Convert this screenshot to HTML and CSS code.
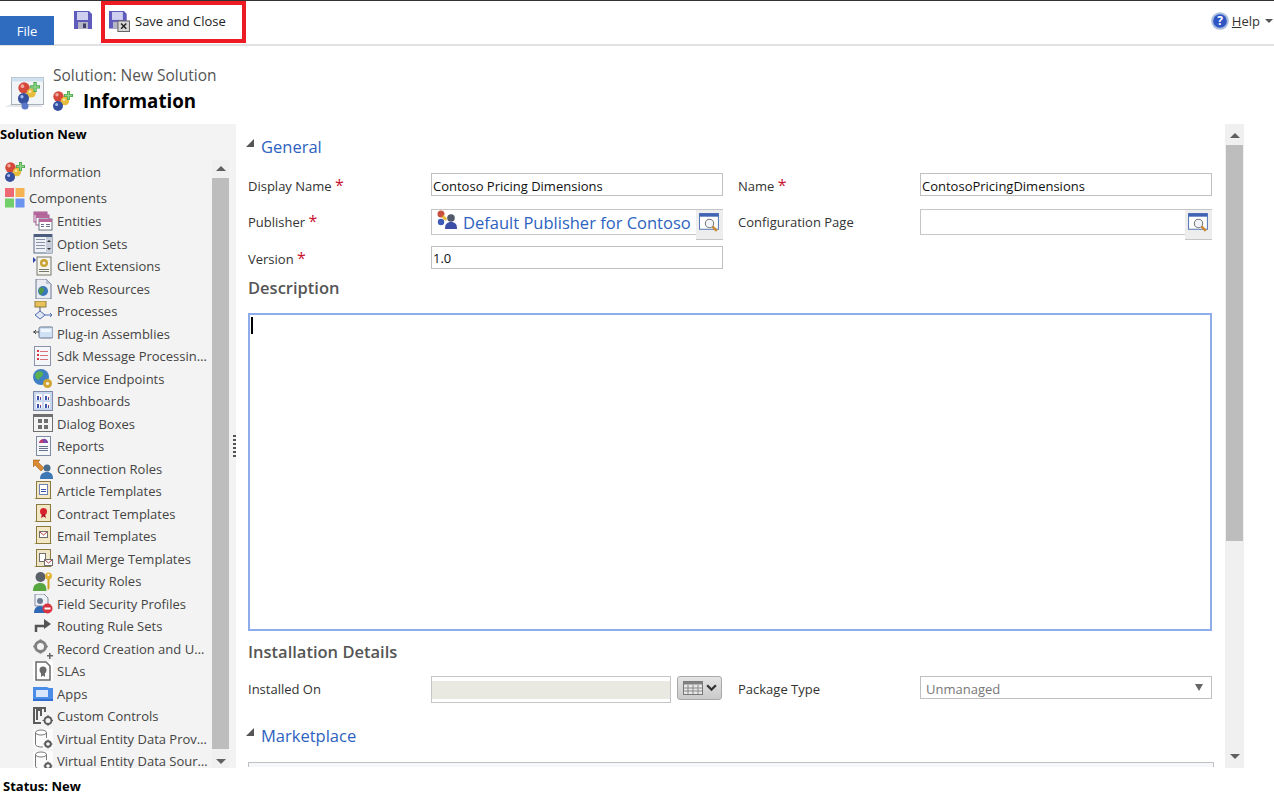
FILE: index.html
```html
<!DOCTYPE html>
<html lang="en">
<head>
<meta charset="UTF-8">
<title>Solution: New Solution</title>
<link rel="stylesheet" href="styles.css">
</head>
<body>

<!-- shared icons -->
<svg class="defs" width="0" height="0">
  <defs>
    <symbol id="i-info" viewBox="0 0 20 20">
      <path d="M6 12l7-6 3 3-8 7z" fill="#d9a92c"/>
      <circle cx="5.500" cy="5.500" r="5.200" fill="#d4493a"/>
      <circle cx="4" cy="3.800" r="1.700" fill="#f4a9a0"/>
      <circle cx="12" cy="10" r="4.200" fill="#e8bd3d"/>
      <circle cx="11" cy="8.800" r="1.300" fill="#f8e6a8"/>
      <circle cx="5" cy="15" r="5" fill="#34509f"/>
      <circle cx="3.600" cy="13.400" r="1.500" fill="#a9bbee"/>
      <path d="M14 0h3v3h3v3h-3v3h-3V6h-3V3h3z" fill="#4aa84a"/>
      <path d="M14.800 .8h1.400v3h3v1.400h-3v3h-1.400v-3h-3V3.800h3z" fill="#8fd48a"/>
    </symbol>
    <symbol id="i-components" viewBox="0 0 20 20">
      <rect width="9" height="9" fill="#ee6a72"/>
      <rect x="10.500" width="9" height="9" fill="#f5b454"/>
      <rect y="10.500" width="9" height="9" fill="#72d06a"/>
      <rect x="10.500" y="10.500" width="9" height="9" fill="#6c94ee"/>
    </symbol>
    <symbol id="i-entities" viewBox="0 0 20 20">
      <rect x="1" y="1" width="13" height="10" fill="#fff" stroke="#a05a8c"/>
      <rect x="1" y="1" width="13" height="3" fill="#b8679c"/>
      <rect x="3" y="4" width="13" height="10" fill="#fff" stroke="#a05a8c"/>
      <rect x="3" y="4" width="13" height="3" fill="#b8679c"/>
      <rect x="6" y="8" width="13" height="11" fill="#fff" stroke="#6b7280"/>
      <rect x="6" y="8" width="13" height="3" fill="#b8679c"/>
      <path d="M8 13h3v1H8zm5 0h4v1h-4zm-5 2h3v1H8zm5 0h4v1h-4z" fill="#66708a"/>
    </symbol>
    <symbol id="i-options" viewBox="0 0 20 20">
      <rect x="1" y="0" width="18" height="19" fill="#eef1f6" stroke="#5c6a86"/>
      <rect x="1" y="0" width="18" height="3" fill="#4c5c7c"/>
      <path d="M3 5h9v1H3zm0 3h9v1H3zm0 3h9v1H3zm0 3h9v1H3z" fill="#8692aa"/>
      <rect x="13" y="3" width="6" height="16" fill="#c7cedb"/>
      <path d="M16 6l2 2h-4zM16 16l-2-2h4z" fill="#333"/>
    </symbol>
    <symbol id="i-client" viewBox="0 0 20 20">
      <path d="M0 1l3 3-3 3z" fill="#2b3fa8"/>
      <rect x="4" y="1" width="14" height="18" fill="#f4f4ea" stroke="#77786e"/>
      <circle cx="11" cy="7" r="4" fill="#c9a232"/>
      <circle cx="11" cy="7" r="1.600" fill="#f4f4ea"/>
      <path d="M6 13h10v1H6zm0 2h10v1H6z" fill="#77786e"/>
    </symbol>
    <symbol id="i-web" viewBox="0 0 20 20">
      <path d="M3 0h10l5 5v15H3z" fill="#e9edf3" stroke="#6a7690"/>
      <path d="M13 0v5h5z" fill="#b7c1d3"/>
      <circle cx="10" cy="12" r="5" fill="#3b78b8"/>
      <path d="M7 9c2-1 4 0 4 2s-3 3-3 5c-2-1-3-5-1-7z" fill="#4f9b45"/>
    </symbol>
    <symbol id="i-process" viewBox="0 0 20 20">
      <rect x="2" y="0" width="11" height="6" fill="#e8c158" stroke="#8b7a40"/>
      <path d="M7 6v4" stroke="#556" fill="none"/>
      <path d="M7 10l5 4-5 4-5-4z" fill="#dfe6f4" stroke="#4f6db0"/>
      <path d="M12 14h7M17 12l2 2-2 2" stroke="#4f6db0" fill="none"/>
    </symbol>
    <symbol id="i-plugin" viewBox="0 0 20 20">
      <rect x="6" y="3" width="14" height="11" rx="1.500" fill="#cfe0f5" stroke="#66748c"/>
      <path d="M0 8h6M3 6L1 8l2 2" stroke="#444" fill="none"/>
      <rect x="8" y="5" width="10" height="3" fill="#f0f6fd"/>
    </symbol>
    <symbol id="i-sdk" viewBox="0 0 20 20">
      <rect x="1.500" y="0.500" width="16" height="19" fill="#f4f6fa" stroke="#8a94a8"/>
      <path d="M4 4h2v2H4zm0 4h2v2H4zm0 4h2v2H4z" fill="#d8333f"/>
      <path d="M7 5h8v1H7zm0 4h8v1H7zm0 4h8v1H7z" fill="#d8707a"/>
    </symbol>
    <symbol id="i-service" viewBox="0 0 20 20">
      <circle cx="8" cy="8" r="8" fill="#3f80c4"/>
      <path d="M3 4c3-3 7-2 7 1s-4 3-4 6c-3-1-5-4-3-7z" fill="#5bb14e"/>
      <circle cx="14.500" cy="14.500" r="4.500" fill="#d0a52f"/>
      <circle cx="14.500" cy="14.500" r="1.600" fill="#f3f3f3"/>
    </symbol>
    <symbol id="i-dash" viewBox="0 0 20 20">
      <rect x="0.500" y="0.500" width="19" height="19" fill="#c9d6ee" stroke="#7c8aa6"/>
      <path d="M3 3h6v6H3zm8 0h6v6h-6zM3 11h6v6H3zm8 0h6v6h-6z" fill="#f5f7fb"/>
      <path d="M4 5h2v4H4zm3 1h1v3H7zm5-1h2v4h-2zm3 1h1v3h-1zM4 13h2v4H4zm3 1h1v3H7zm5-1h2v4h-2zm3 1h1v3h-1z" fill="#3c54ac"/>
      <path d="M7 6h1v1H7zm8 0h1v1h-1zM7 14h1v1H7zm8 0h1v1h-1z" fill="#d8333f"/>
    </symbol>
    <symbol id="i-dialog" viewBox="0 0 20 20">
      <rect x="0.500" y="0.500" width="19" height="17" fill="#f3f3f3" stroke="#6f6f6f"/>
      <rect x="0.500" y="0.500" width="19" height="2.500" fill="#6f6f6f"/>
      <path d="M5 5h4v4H5zm6 0h4v4h-4zM5 11h4v4H5zm6 0h4v4h-4z" fill="#6f6f6f"/>
    </symbol>
    <symbol id="i-report" viewBox="0 0 20 20">
      <rect x="3.500" y="0.500" width="14" height="19" fill="#f6f7fa" stroke="#7f8ba2"/>
      <path d="M6 7a4.500 4 0 0 1 9 0z" fill="#c23a6b"/>
      <path d="M10 3a4 4 0 0 1 5 4h-5z" fill="#7a4ba8"/>
      <path d="M6 10h9v1H6zm0 2h9v1H6zm0 2h9v1H6z" fill="#66708a"/>
    </symbol>
    <symbol id="i-connection" viewBox="0 0 20 20">
      <path d="M0 1h7l-2 2 6 6-3 3-6-6-2 2z" fill="#d98a32" stroke="#8f5415" stroke-width="0.500"/>
      <circle cx="14" cy="9" r="3.500" fill="#4a6c8c"/>
      <path d="M7 20c0-5 3-7 7-7s6 2 6 7z" fill="#3e78b4"/>
    </symbol>
    <symbol id="i-article" viewBox="0 0 20 20">
      <path d="M1 18l3-2h13l2 2z" fill="#b8a060"/>
      <rect x="3.500" y="0.500" width="14" height="17" fill="#f2e8c6" stroke="#8b7a40"/>
      <rect x="6.500" y="3.500" width="8" height="10" fill="#fff" stroke="#6d7eb8"/>
      <path d="M8 8h5v1H8zm0 2h5v1H8z" fill="#3c54ac"/>
    </symbol>
    <symbol id="i-contract" viewBox="0 0 20 20">
      <path d="M1 18l3-2h13l2 2z" fill="#b8a060"/>
      <rect x="3.500" y="0.500" width="14" height="17" fill="#f2e8c6" stroke="#8b7a40"/>
      <circle cx="10.500" cy="7.500" r="3.500" fill="#d8232f"/>
      <path d="M9 10l-1 4 2.500-1.500L13 14l-1-4z" fill="#b01a24"/>
    </symbol>
    <symbol id="i-email" viewBox="0 0 20 20">
      <path d="M1 18l3-2h13l2 2z" fill="#b8a060"/>
      <rect x="3.500" y="0.500" width="14" height="17" fill="#f2e8c6" stroke="#8b7a40"/>
      <rect x="6.500" y="5.500" width="8" height="6" fill="#fff" stroke="#6f6f6f"/>
      <path d="M7 6l3.500 3L14 6" stroke="#b03a3a" fill="none"/>
    </symbol>
    <symbol id="i-merge" viewBox="0 0 20 20">
      <path d="M1 18l3-2h13l2 2z" fill="#b8a060"/>
      <rect x="3.500" y="0.500" width="14" height="17" fill="#efe6c8" stroke="#8b7a40"/>
      <rect x="6.500" y="4.500" width="6" height="8" fill="#fff" stroke="#6f6f6f"/>
      <rect x="11.500" y="10.500" width="8" height="6" fill="#fff" stroke="#6f6f6f"/>
      <path d="M12 11l3.500 3 3.500-3" stroke="#b03a3a" fill="none"/>
    </symbol>
    <symbol id="i-security" viewBox="0 0 20 20">
      <circle cx="7.500" cy="6" r="5" fill="#5c6068"/>
      <path d="M0 20c0-6 3-8 7.500-8s6 3 6 8z" fill="#57a63f"/>
      <circle cx="15.500" cy="5" r="3.500" fill="#e3b533"/>
      <circle cx="15.500" cy="4" r="1.100" fill="#f3f3f3"/>
      <path d="M14.500 8h2v9l-1 2-1-1z" fill="#d19f22"/>
    </symbol>
    <symbol id="i-field" viewBox="0 0 20 20">
      <path d="M2 0h9l4 4v8H2z" fill="#eef1f6" stroke="#7f8ba2"/>
      <circle cx="7" cy="7" r="3" fill="#6c7a92"/>
      <path d="M1 19c0-4 2-7 6-7s5 3 5 7z" fill="#2f68b4"/>
      <circle cx="14.500" cy="14.500" r="5" fill="#d8333f"/>
      <rect x="11.500" y="13.500" width="6" height="2" fill="#fff"/>
    </symbol>
    <symbol id="i-routing" viewBox="0 0 20 20">
      <path d="M3 16v-6h8" stroke="#555" stroke-width="2.500" fill="none"/>
      <path d="M11 3l7 5-7 5z" fill="#555"/>
    </symbol>
    <symbol id="i-record" viewBox="0 0 20 20">
      <circle cx="7.500" cy="7.500" r="5" fill="none" stroke="#808080" stroke-width="3"/>
      <circle cx="7.500" cy="1.500" r="1.300" fill="#808080"/>
      <circle cx="7.500" cy="13.500" r="1.300" fill="#808080"/>
      <circle cx="1.500" cy="7.500" r="1.300" fill="#808080"/>
      <circle cx="13.500" cy="7.500" r="1.300" fill="#808080"/>
      <path d="M16 14h1.500v2H20v1.500h-2.500V20H16v-2.500h-2V16h2z" fill="#666"/>
    </symbol>
    <symbol id="i-sla" viewBox="0 0 20 20">
      <rect width="20" height="20" fill="#fff"/>
      <path d="M3 1h10l4 4v14H3z" fill="#fff" stroke="#6a6a6a" stroke-width="1.500"/>
      <circle cx="10" cy="9" r="3.500" fill="#6a6a6a"/>
      <path d="M8 11v5l2-1.500 2 1.500v-5z" fill="#6a6a6a"/>
    </symbol>
    <symbol id="i-apps" viewBox="0 0 20 20">
      <path d="M0 3h14l2 1h4v13H0z" fill="#4a8de8"/>
      <rect x="3" y="6" width="12" height="7" fill="#d8e6fa"/>
      <rect x="0" y="15" width="20" height="2" fill="#2f6fd0"/>
    </symbol>
    <symbol id="i-custom" viewBox="0 0 20 20">
      <path d="M0 1h13v5h-2V3H9v7H7V5H5v9H3V3H2v13h6v2H0z" fill="#5c5c5c"/>
      <path d="M9 1h4v2H9z" fill="#5c5c5c"/>
      <circle cx="15" cy="14.500" r="3.500" fill="none" stroke="#5c5c5c" stroke-width="2"/>
      <path d="M14.500 9h1v2h-1zm0 9h1v2h-1zM9.500 14h2v1h-2zm9 0h2v1h-2z" fill="#5c5c5c"/>
    </symbol>
    <symbol id="i-virtual" viewBox="0 0 20 20">
      <rect width="20" height="20" fill="#fbfbfb"/>
      <ellipse cx="8" cy="3.500" rx="5.500" ry="2.500" fill="#fff" stroke="#777"/>
      <path d="M2.500 3.500v12c0 1.500 3 2.500 5.500 2.500h2M13.500 3.500V9" fill="none" stroke="#777"/>
      <circle cx="15" cy="15" r="2.800" fill="none" stroke="#5c5c5c" stroke-width="2"/>
      <path d="M14.500 10.500h1v1.500h-1zm0 7.500h1v1.500h-1zM10.500 14.500H12v1h-1.500zm7.500 0h1.500v1H18z" fill="#5c5c5c"/>
    </symbol>
    <symbol id="i-save" viewBox="0 0 18 18">
      <path d="M0 0h15l3 3v15H0z" fill="#5f5bbd"/>
      <rect x="3" y="1" width="11" height="8" fill="#cfcff0"/>
      <rect x="4" y="11" width="10" height="7" fill="#b4b4c4"/>
      <rect x="9" y="12.500" width="3" height="4.500" fill="#40406a"/>
    </symbol>
    <symbol id="i-lookup" viewBox="0 0 20 20">
      <rect x="0.500" y="0.500" width="18" height="15" fill="#fff" stroke="#5a7ab8"/>
      <rect x="0.500" y="0.500" width="18" height="3" fill="#3f62b4"/>
      <circle cx="10" cy="10" r="4" fill="#f0f3f8" stroke="#777"/>
      <path d="M13 13l4 4" stroke="#c98a36" stroke-width="2.500"/>
    </symbol>
  </defs>
</svg>

<div class="ribbon">
  <div class="file-tab">File</div>
  <svg class="save-icon"><use href="#i-save"/></svg>
  <div class="save-close">
    <svg class="save-close-icon" viewBox="0 0 20 20">
      <use href="#i-save" width="17" height="17"/>
      <rect x="8.500" y="9.500" width="11" height="10" fill="#d9d9d9" stroke="#666"/>
      <path d="M11.500 12l5 5M16.500 12l-5 5" stroke="#222" stroke-width="1.400"/>
    </svg>
    <span>Save and Close</span>
  </div>
  <div class="help">
    <svg class="help-icon" viewBox="0 0 18 18">
      <circle cx="9" cy="9" r="8.800" fill="#a9bcdc"/>
      <circle cx="9" cy="9" r="6.800" fill="#2f55c4"/>
      <text x="9" y="13" text-anchor="middle" class="help-mark">?</text>
    </svg>
    <span class="help-text"><u>H</u>elp</span>
    <span class="help-caret"></span>
  </div>
</div>

<div class="page-head">
  <svg class="head-icon" viewBox="0 0 40 36">
    <path d="M0 32l8-4h26l4 4z" fill="#e4e6ea"/>
    <rect x="6.500" y="2.500" width="32" height="27" fill="#f2f5f8" stroke="#a8b0b8"/>
    <rect x="6.500" y="2.500" width="32" height="4" fill="#cfe0ee"/>
    <use href="#i-info" x="13" y="7" width="22" height="22"/>
    <circle cx="20" cy="31" r="3.500" fill="#5a78c8"/>
  </svg>
  <div class="head-text">
    <div class="head-sub">Solution: New Solution</div>
    <div class="head-title">
      <svg class="title-icon"><use href="#i-info"/></svg>
      <span>Information</span>
    </div>
  </div>
</div>

<div class="main">
  <nav class="nav">
    <div class="nav-title">Solution New</div>
    <div class="nav-body">
      <ul class="nav-list">
        <li class="nav-top"><svg class="nav-icon"><use href="#i-info"/></svg><span>Information</span></li>
        <li class="nav-top"><svg class="nav-icon"><use href="#i-components"/></svg><span>Components</span></li>
        <li class="nav-sub"><svg class="nav-icon"><use href="#i-entities"/></svg><span>Entities</span></li>
        <li class="nav-sub"><svg class="nav-icon"><use href="#i-options"/></svg><span>Option Sets</span></li>
        <li class="nav-sub"><svg class="nav-icon"><use href="#i-client"/></svg><span>Client Extensions</span></li>
        <li class="nav-sub"><svg class="nav-icon"><use href="#i-web"/></svg><span>Web Resources</span></li>
        <li class="nav-sub"><svg class="nav-icon"><use href="#i-process"/></svg><span>Processes</span></li>
        <li class="nav-sub"><svg class="nav-icon"><use href="#i-plugin"/></svg><span>Plug-in Assemblies</span></li>
        <li class="nav-sub"><svg class="nav-icon"><use href="#i-sdk"/></svg><span>Sdk Message Processing Steps</span></li>
        <li class="nav-sub"><svg class="nav-icon"><use href="#i-service"/></svg><span>Service Endpoints</span></li>
        <li class="nav-sub"><svg class="nav-icon"><use href="#i-dash"/></svg><span>Dashboards</span></li>
        <li class="nav-sub"><svg class="nav-icon"><use href="#i-dialog"/></svg><span>Dialog Boxes</span></li>
        <li class="nav-sub"><svg class="nav-icon"><use href="#i-report"/></svg><span>Reports</span></li>
        <li class="nav-sub"><svg class="nav-icon"><use href="#i-connection"/></svg><span>Connection Roles</span></li>
        <li class="nav-sub"><svg class="nav-icon"><use href="#i-article"/></svg><span>Article Templates</span></li>
        <li class="nav-sub"><svg class="nav-icon"><use href="#i-contract"/></svg><span>Contract Templates</span></li>
        <li class="nav-sub"><svg class="nav-icon"><use href="#i-email"/></svg><span>Email Templates</span></li>
        <li class="nav-sub"><svg class="nav-icon"><use href="#i-merge"/></svg><span>Mail Merge Templates</span></li>
        <li class="nav-sub"><svg class="nav-icon"><use href="#i-security"/></svg><span>Security Roles</span></li>
        <li class="nav-sub"><svg class="nav-icon"><use href="#i-field"/></svg><span>Field Security Profiles</span></li>
        <li class="nav-sub"><svg class="nav-icon"><use href="#i-routing"/></svg><span>Routing Rule Sets</span></li>
        <li class="nav-sub"><svg class="nav-icon"><use href="#i-record"/></svg><span>Record Creation and Update Rules</span></li>
        <li class="nav-sub"><svg class="nav-icon"><use href="#i-sla"/></svg><span>SLAs</span></li>
        <li class="nav-sub"><svg class="nav-icon"><use href="#i-apps"/></svg><span>Apps</span></li>
        <li class="nav-sub"><svg class="nav-icon"><use href="#i-custom"/></svg><span>Custom Controls</span></li>
        <li class="nav-sub"><svg class="nav-icon"><use href="#i-virtual"/></svg><span>Virtual Entity Data Providers</span></li>
        <li class="nav-sub"><svg class="nav-icon"><use href="#i-virtual"/></svg><span>Virtual Entity Data Sources</span></li>
      </ul>
      <div class="nav-scroll">
        <div class="arrow-up"></div>
        <div class="nav-thumb"></div>
        <div class="arrow-down"></div>
      </div>
    </div>
  </nav>

  <div class="splitter"><div class="splitter-dots"></div></div>

  <div class="content">
    <div class="section-head section-general"><span class="collapse"></span>General</div>

    <div class="form-row row-name">
      <label class="field-label">Display Name <b class="req">*</b></label>
      <div class="text-box">Contoso Pricing Dimensions</div>
      <label class="field-label">Name <b class="req">*</b></label>
      <div class="text-box">ContosoPricingDimensions</div>
    </div>

    <div class="form-row row-publisher">
      <label class="field-label">Publisher <b class="req">*</b></label>
      <div class="lookup">
        <svg class="lookup-value-icon" viewBox="0 0 20 20">
          <circle cx="4" cy="4" r="3.500" fill="#c8503f"/>
          <path d="M6 5l4 3-1 3-4-3z" fill="#e8bd3d"/>
          <circle cx="4" cy="12" r="3.200" fill="#3c5cb8"/>
          <circle cx="14" cy="8" r="3.800" fill="#50586a"/>
          <path d="M8 19c0-5 2-7 6-7s6 2 6 7z" fill="#3c4fa8"/>
        </svg>
        <span class="lookup-link">Default Publisher for Contoso</span>
        <div class="lookup-btn"><svg class="lookup-icon"><use href="#i-lookup"/></svg></div>
      </div>
      <label class="field-label">Configuration Page</label>
      <div class="lookup">
        <div class="lookup-btn"><svg class="lookup-icon"><use href="#i-lookup"/></svg></div>
      </div>
    </div>

    <div class="form-row row-version">
      <label class="field-label">Version <b class="req">*</b></label>
      <div class="text-box">1.0</div>
    </div>

    <div class="group-head group-desc">Description</div>
    <div class="desc-box"><span class="caret"></span></div>

    <div class="group-head">Installation Details</div>
    <div class="form-row row-install">
      <label class="field-label">Installed On</label>
      <div class="date-field">
        <div class="date-box"><div class="date-fill"></div></div>
        <div class="date-btn">
          <svg class="date-icon" viewBox="0 0 20 14">
            <rect x="0.500" y="0.500" width="19" height="13" fill="#e8e8e8" stroke="#777"/>
            <rect x="0.500" y="0.500" width="19" height="3" fill="#808080"/>
            <path d="M5 4v9M10 4v9M15 4v9M1 7h18M1 10h18" stroke="#888"/>
          </svg>
          <svg class="date-chevron" viewBox="0 0 10 7">
            <path d="M1 1l4 4 4-4" fill="none" stroke="#333" stroke-width="2"/>
          </svg>
        </div>
      </div>
      <label class="field-label">Package Type</label>
      <div class="select-box">Unmanaged<span class="select-arrow"></span></div>
    </div>

    <div class="section-head section-market"><span class="collapse"></span>Marketplace</div>
    <div class="market-box"></div>
  </div>

  <div class="page-scroll">
    <div class="arrow-up"></div>
    <div class="page-thumb"></div>
    <div class="arrow-down"></div>
  </div>
</div>

<div class="status">Status: New</div>

</body>
</html>
```

FILE: styles.css
```css
body {
    margin: 0;
    width: 1274px;
    height: 800px;
    overflow: hidden;
    background-color: #fff;
    font-family: "Open Sans", "Noto Sans", sans-serif;
    font-size: 13px;
    color: #444;
}
.defs {
    position: absolute;
}

/* ribbon */
.ribbon {
    display: flex;
    height: 43px;
    border-top: 1px solid #333;
    border-bottom: 2px solid #e2e2e2;
}
.file-tab {
    width: 54px;
    height: 29px;
    margin-top: 15px;
    background-color: #2f6cc0;
    color: #fff;
    font-size: 13px;
    font-weight: 400;
    line-height: 31px;
    text-align: center;
}
.save-icon {
    width: 18px;
    height: 18px;
    margin: 10px 0 0 20px;
}
.save-close {
    display: flex;
    align-items: center;
    box-sizing: border-box;
    width: 145px;
    height: 42px;
    margin-left: 9px;
    padding: 0 0 2px 4px;
    border: 4px solid #ed1c24;
    color: #222;
}
.save-close-icon {
    width: 21px;
    height: 21px;
    margin-right: 5px;
}
.help {
    display: flex;
    align-items: flex-start;
    margin-left: auto;
    padding-top: 11px;
    color: #333;
}
.help-icon {
    width: 18px;
    height: 18px;
    margin-right: 3px;
}
.help-mark {
    font-size: 12px;
    font-weight: 700;
    fill: #fff;
}
.help-text {
    line-height: 18px;
}
.help-caret {
    width: 0;
    height: 0;
    margin: 7px 1px 0 5px;
    border-left: 4px solid transparent;
    border-right: 4px solid transparent;
    border-top: 4px solid #555;
}

/* page header */
.page-head {
    display: flex;
    height: 78px;
}
.head-icon {
    width: 40px;
    height: 36px;
    margin: 29px 8px 0 5px;
    flex-shrink: 0;
}
.head-sub {
    margin-top: 19px;
    font-size: 15.5px;
    line-height: 21px;
    color: #555;
}
.head-title {
    display: flex;
    align-items: center;
    margin-top: 2px;
    font-size: 18.7px;
    font-weight: 700;
    color: #000;
}
.title-icon {
    width: 20px;
    height: 20px;
    margin-right: 10px;
}

/* main area */
.main {
    display: flex;
    height: 644px;
}
.nav {
    width: 229px;
    background-color: #f3f3f3;
    flex-shrink: 0;
}
.nav-title {
    height: 36px;
    font-size: 13px;
    font-weight: 700;
    line-height: 21px;
    color: #000;
}
.nav-body {
    display: flex;
    height: 608px;
    overflow: hidden;
}
.nav-list {
    width: 212px;
    margin: 0;
    padding: 0;
    list-style: none;
}
.nav-top, .nav-sub {
    display: flex;
    align-items: center;
    white-space: nowrap;
}
.nav-top {
    height: 27px;
    padding-left: 5px;
}
.nav-top:first-child {
    height: 24px;
}
.nav-sub {
    height: 22.5px;
    padding-left: 33px;
}
.nav-sub:nth-child(3) {
    margin-top: -1px;
}
.nav-icon {
    width: 20px;
    height: 20px;
    margin-right: 4px;
    flex-shrink: 0;
}
.nav-sub span {
    width: 152px;
    overflow: hidden;
    text-overflow: ellipsis;
}
.nav-scroll, .page-scroll {
    display: flex;
    flex-direction: column;
    align-items: center;
    background-color: #f0f0f0;
}
.nav-scroll {
    width: 17px;
    padding-top: 6px;
    box-sizing: border-box;
}
.nav-thumb {
    width: 17px;
    height: 571px;
    margin: 7px 0 10px;
    background-color: #bdbdbd;
}
.arrow-up, .arrow-down {
    width: 0;
    height: 0;
    border-left: 5px solid transparent;
    border-right: 5px solid transparent;
}
.arrow-up {
    border-bottom: 5px solid #606060;
}
.arrow-down {
    border-top: 5px solid #606060;
}
.splitter {
    display: flex;
    align-items: center;
    justify-content: flex-end;
    width: 7px;
    background-color: #f3f3f3;
    flex-shrink: 0;
}
.splitter-dots {
    width: 3px;
    height: 23px;
    background: repeating-linear-gradient(#555 0 2px, transparent 2px 4px);
}

/* form */
.content {
    width: 989px;
    height: 644px;
    padding-left: 12px;
    box-sizing: border-box;
    overflow: hidden;
    flex-shrink: 0;
}
.section-head {
    display: flex;
    align-items: center;
    height: 24px;
    margin-left: -2px;
    font-size: 16.5px;
    color: #2d62c0;
}
.section-general {
    margin-top: 10px;
}
.section-market {
    margin-top: 20px;
}
.collapse {
    width: 0;
    height: 0;
    margin: -6px 7px 0 0;
    border-left: 8px solid transparent;
    border-bottom: 8px solid #555;
}
.form-row {
    display: grid;
    grid-template-columns: 183px 292px 15px 182px 292px;
    align-items: start;
}
.form-row > :nth-child(2) {
    grid-column: 2;
}
.form-row > :nth-child(3) {
    grid-column: 4;
}
.form-row > :nth-child(4) {
    grid-column: 5;
}
.row-name {
    margin-top: 15px;
    height: 23px;
}
.row-publisher {
    margin-top: 13px;
    height: 26px;
}
.row-version {
    margin-top: 11px;
    height: 23px;
}
.row-install {
    margin-top: 13px;
    height: 27px;
}
.field-label {
    line-height: 27px;
    color: #333;
}
.row-publisher .field-label, .row-install .field-label {
    line-height: 26px;
}
.req {
    font-weight: 400;
    font-size: 16px;
    line-height: 14px;
    color: #c8102e;
}
.text-box {
    box-sizing: border-box;
    height: 23px;
    padding-left: 1px;
    border: 1px solid #c0c0c0;
    line-height: 24px;
    color: #111;
}
.row-version .text-box {
    line-height: 23px;
}
.lookup {
    position: relative;
    display: flex;
    align-items: center;
    box-sizing: border-box;
    height: 26px;
    padding-left: 5px;
    border: 1px solid #c6c6c6;
}
.lookup-value-icon {
    width: 20px;
    height: 20px;
    margin-right: 6px;
    margin-top: -4px;
}
.lookup-link {
    font-size: 16.5px;
    color: #2d62c0;
    white-space: nowrap;
}
.lookup-btn {
    position: absolute;
    right: -1px;
    top: 0;
    width: 27px;
    height: 30px;
    box-sizing: border-box;
    padding: 3px 0 0 3px;
    background-color: #ededed;
    border-bottom: 1px solid #c6c6c6;
}
.lookup-icon {
    width: 21px;
    height: 21px;
}
.group-head {
    display: flex;
    align-items: center;
    height: 24px;
    font-size: 16.5px;
    font-weight: 600;
    color: #555;
}
.group-desc {
    margin-top: 6px;
}
.desc-box {
    box-sizing: border-box;
    width: 964px;
    height: 318px;
    margin: 14px 0 8px;
    padding: 2px 1px;
    border: 2px solid #8eabea;
}
.caret {
    display: block;
    width: 2px;
    height: 17px;
    background-color: #000;
}
.date-field {
    display: flex;
    gap: 6px;
}
.date-box {
    display: flex;
    align-items: center;
    box-sizing: border-box;
    width: 240px;
    height: 27px;
    border: 1px solid #c6c6c6;
}
.date-fill {
    width: 100%;
    height: 18px;
    background-color: #e9e9e2;
}
.date-btn {
    display: flex;
    align-items: center;
    box-sizing: border-box;
    width: 45px;
    height: 24px;
    padding-left: 5px;
    border: 1px solid #a8a8a8;
    border-radius: 3px;
    background: linear-gradient(#e4e4e4, #cacaca);
}
.date-icon {
    width: 20px;
    height: 14px;
    margin-right: 3px;
}
.date-chevron {
    width: 11px;
    height: 8px;
}
.select-box {
    position: relative;
    box-sizing: border-box;
    height: 23px;
    padding-left: 5px;
    border: 1px solid #c0c0c0;
    line-height: 24px;
    color: #777;
}
.select-arrow {
    position: absolute;
    right: 8px;
    top: 7px;
    width: 0;
    height: 0;
    border-left: 4px solid transparent;
    border-right: 4px solid transparent;
    border-top: 7px solid #666;
}
.market-box {
    width: 966px;
    height: 5px;
    margin-top: 15px;
    box-sizing: border-box;
    background-color: #f5f7fa;
    border: 1px solid #c0c0c0;
    border-bottom: none;
}

/* page scrollbar */
.page-scroll {
    width: 19px;
    padding-top: 9px;
    box-sizing: border-box;
    height: 644px;
}
.page-thumb {
    width: 17px;
    height: 396px;
    margin: 7px 0 213px;
    background-color: #bdbdbd;
}

/* status bar */
.status {
    padding: 9px 0 0 3px;
    font-size: 13px;
    font-weight: 700;
    color: #000;
}
```
